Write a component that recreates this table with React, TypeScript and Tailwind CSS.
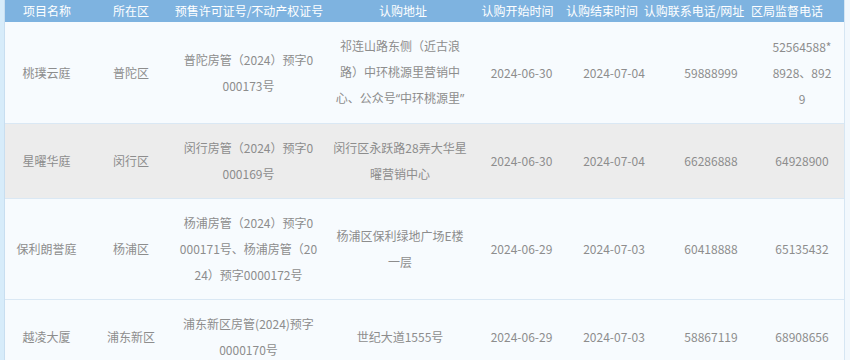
import React from "react";

const headW = ["w-[84px]", "w-[84px]", "w-[152px]", "w-[156px]", "w-[73px]", "w-[96px]", "w-[88px]", "w-[98px]"];
const bodyW = ["w-[83px]", "w-[86px]", "w-[149px]", "w-[154px]", "w-[89px]", "w-[96px]", "w-[98px]", "w-[84px]"];

const headers = ["项目名称", "所在区", "预售许可证号/不动产权证号", "认购地址", "认购开始时间", "认购结束时间", "认购联系电话/网址", "区局监督电话"];

type Row = { cells: React.ReactNode[][]; gray?: boolean };

const Q = ({ c }: { c: string }) => <span style={{ fontFamily: '"Noto Sans", sans-serif' }}>{c}</span>;

const rows: Row[] = [
  {
    cells: [
      ["桃璞云庭"],
      ["普陀区"],
      ["普陀房管（2024）预字0", "000173号"],
      [
        "祁连山路东侧（近古浪",
        "路）中环桃源里营销中",
        <>
          心、公众号<Q c="“" />中环桃源里<Q c="”" />
        </>,
      ],
      ["2024-06-30"],
      ["2024-07-04"],
      ["59888999"],
      ["52564588*", "8928、892", "9"],
    ],
  },
  {
    gray: true,
    cells: [
      ["星曜华庭"],
      ["闵行区"],
      ["闵行房管（2024）预字0", "000169号"],
      ["闵行区永跃路28弄大华星", "曜营销中心"],
      ["2024-06-30"],
      ["2024-07-04"],
      ["66286888"],
      ["64928900"],
    ],
  },
  {
    cells: [
      ["保利朗誉庭"],
      ["杨浦区"],
      ["杨浦房管（2024）预字0", "000171号、杨浦房管（20", "24）预字0000172号"],
      ["杨浦区保利绿地广场E楼", "一层"],
      ["2024-06-29"],
      ["2024-07-03"],
      ["60418888"],
      ["65135432"],
    ],
  },
  {
    cells: [
      ["越凌大厦"],
      ["浦东新区"],
      ["浦东新区房管(2024)预字", "0000170号"],
      ["世纪大道1555号"],
      ["2024-06-29"],
      ["2024-07-03"],
      ["58867119"],
      ["68908656"],
    ],
  },
];

export default function App() {
  return (
    <div
      className="w-[850px] h-[360px] overflow-hidden flex bg-[#f7fbfe]"
      style={{ fontFamily: '"Microsoft YaHei", "Noto Sans CJK SC", "Noto Sans", sans-serif' }}
    >
      <div className="w-[5px] shrink-0 bg-[#d7ecfa] border-r border-[#c8def0]" />
      <div className="w-[839px] shrink-0 flex flex-col">
        <div className="h-[22px] flex bg-[#7eb3e0] text-white text-[12px] shrink-0">
          {headers.map((h, i) => (
            <div key={i} className={`${headW[i]} shrink-0 flex items-center justify-center whitespace-nowrap`}>
              <span>{h}</span>
            </div>
          ))}
        </div>
        {rows.map((r, ri) => (
          <div
            key={ri}
            className={`flex shrink-0 border-b border-[#dae8f4] py-[11px] text-[12px] leading-[26px] text-[#8d8d8d] ${
              r.gray ? "bg-[#ececec]" : "bg-[#f7fbfe]"
            }`}
          >
            {r.cells.map((c, ci) => (
              <div key={ci} className={`${bodyW[ci]} shrink-0 flex flex-col items-center justify-center`}>
                {c.map((line, li) => (
                  <span key={li} className="whitespace-nowrap">
                    {line}
                  </span>
                ))}
              </div>
            ))}
          </div>
        ))}
      </div>
      <div className="flex-1 bg-[#f2f8fd] border-l border-[#d6e6f3]" />
    </div>
  );
}
